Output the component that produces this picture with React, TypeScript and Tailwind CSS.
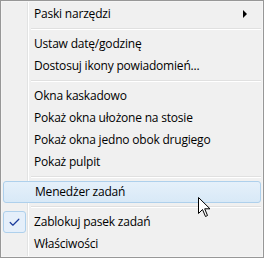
import { Check } from "lucide-react";

type Row =
  | { kind: "item"; label: string; submenu?: boolean; checked?: boolean; hover?: boolean }
  | { kind: "sep" };

const rows: Row[] = [
  { kind: "item", label: "Paski narzędzi", submenu: true },
  { kind: "sep" },
  { kind: "item", label: "Ustaw datę/godzinę" },
  { kind: "item", label: "Dostosuj ikony powiadomień..." },
  { kind: "sep" },
  { kind: "item", label: "Okna kaskadowo" },
  { kind: "item", label: "Pokaż okna ułożone na stosie" },
  { kind: "item", label: "Pokaż okna jedno obok drugiego" },
  { kind: "item", label: "Pokaż pulpit" },
  { kind: "sep" },
  { kind: "item", label: "Menedżer zadań", hover: true },
  { kind: "sep" },
  { kind: "item", label: "Zablokuj pasek zadań", checked: true },
  { kind: "item", label: "Właściwości" },
];

const MenuItem = ({ row }: { row: Extract<Row, { kind: "item" }> }) => (
  <div
    className={`relative flex h-[22px] items-center pl-[31px] pr-3 ${
      row.hover
        ? "rounded-[3px] border border-[#aed0ec] bg-[linear-gradient(to_bottom,#e5f0fa,#d8e9f7)] pl-[30px]"
        : ""
    }`}
  >
    {row.checked && (
      <div className="absolute left-0 top-0 flex h-[22px] w-[23px] items-center justify-center rounded-[3px] border border-[#aed0ec] bg-[#e5effa]">
        <Check className="h-[13px] w-[13px] text-[#1b3b9c]" strokeWidth={2.2} />
      </div>
    )}
    <span className="flex-1 whitespace-nowrap">{row.label}</span>
    {row.submenu && (
      <svg width="5" height="8" viewBox="0 0 5 8" className="mr-[1px]">
        <path d="M0 0 L4 4 L0 8 Z" fill="#000" />
      </svg>
    )}
  </div>
);

export default function App() {
  return (
    <div className="relative h-[258px] w-[264px] border border-[#979797] bg-[#f0f0f0] text-[12px] tracking-[-0.2px] text-[#000] [font-family:'Segoe_UI','Open_Sans',sans-serif]">
      <div className="h-full border border-[#f5f5f5] bg-[linear-gradient(to_right,transparent_25px,#e2e3e3_25px,#e2e3e3_26px,#fff_26px,#fff_27px,transparent_27px)] p-[1px]">
        {rows.map((row, i) =>
          row.kind === "sep" ? (
            <div key={i} className="h-[8px] pl-[28px] pt-[3px]">
              <div className="h-px bg-[#e0e0e0]" />
              <div className="h-px bg-white" />
            </div>
          ) : (
            <MenuItem key={i} row={row} />
          )
        )}
      </div>
      {/* mouse pointer */}
      <svg
        width="13"
        height="21"
        viewBox="0 0 13 21"
        className="absolute left-[197px] top-[196px]"
      >
        <path
          d="M0.5 0.5 L0.5 16.5 L4.5 12.5 L7.5 19.5 L9.5 18.5 L6.7 11.8 L12 11.8 Z"
          fill="#fff"
          stroke="#000"
          strokeWidth="1"
          strokeLinejoin="miter"
        />
      </svg>
    </div>
  );
}
